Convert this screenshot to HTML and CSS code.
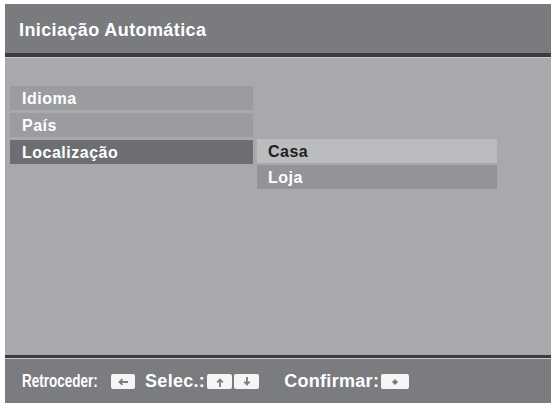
FILE: index.html
```html
<!DOCTYPE html>
<html lang="pt">
<head>
<meta charset="utf-8">
<title>Iniciação Automática</title>
<link rel="stylesheet" href="styles.css">
</head>
<body>
<div class="screen">
  <header class="header">
    <h1 class="title">Iniciação Automática</h1>
  </header>
  <main class="body">
    <ul class="menu">
      <li class="item">Idioma</li>
      <li class="item">País</li>
      <li class="item item-active">Localização</li>
    </ul>
    <ul class="submenu">
      <li class="opt opt-focus">Casa</li>
      <li class="opt">Loja</li>
    </ul>
  </main>
  <footer class="footer">
    <span class="label label-back">Retroceder:</span>
    <span class="key key-back">
      <svg width="12" height="8" viewBox="0 0 12 8"><path d="M11 4H3M5.5 1.2L2.5 4l3 2.8" fill="none" stroke="#7a7b7e" stroke-width="1.8"/></svg>
    </span>
    <span class="label label-sel">Selec.:</span>
    <span class="key">
      <svg width="8" height="10" viewBox="0 0 8 10"><path d="M4 10V3M1.2 5.5L4 2.5l2.8 3" fill="none" stroke="#7a7b7e" stroke-width="1.8"/></svg>
    </span>
    <span class="key">
      <svg width="8" height="10" viewBox="0 0 8 10"><path d="M4 0v7M1.2 4.5L4 7.5l2.8-3" fill="none" stroke="#7a7b7e" stroke-width="1.8"/></svg>
    </span>
    <span class="label label-conf">Confirmar:</span>
    <span class="key key-wide">
      <svg width="8" height="8" viewBox="0 0 8 8"><path d="M4 1L7 4L4 7L1 4Z" fill="#7a7b7e"/></svg>
    </span>
  </footer>
</div>
</body>
</html>
```

FILE: styles.css
```css
* { box-sizing: border-box; }
html, body { margin: 0; padding: 0; background: #ffffff; }
body { width: 553px; height: 403px; overflow: hidden; }

.screen {
  margin: 4px 2px 0 5px;
  height: 399px;
  display: flex;
  flex-direction: column;
  font-family: "Liberation Sans", Arial, sans-serif;
  background: #a8a9ac;
}

.header {
  height: 53px;
  background: #7a7b7e;
  border-bottom: 4px solid #3b3c3e;
  box-shadow: 0 1px 0 #c6c7c9;
  padding: 3px 0 0 14px;
  display: flex;
  align-items: center;
}
.title {
  margin: 0;
  font-size: 18px;
  letter-spacing: 0.4px;
  font-weight: bold;
  color: #ffffff;
}

.body {
  flex: 1;
  display: flex;
  gap: 4px;
  padding: 29px 0 0 5px;
}

.menu, .submenu {
  list-style: none;
  margin: 0;
  padding: 0;
}
.menu { width: 243px; }
.submenu { width: 240px; padding-top: 53px; }

.item, .opt {
  height: 24px;
  line-height: 22px;
  padding: 2px 0 0 12px;
  font-size: 16px;
  letter-spacing: 0.5px;
  font-weight: bold;
  color: #ffffff;
}
.item { background: #9b9ca0; margin-bottom: 3px; }
.item-active { background: #6d6e71; }

.opt { background: #939497; margin-bottom: 2px; padding-left: 11px; }
.opt-focus { background: #bbbcbf; color: #1f1f21; }

.footer {
  height: 48px;
  background: #7b7c7f;
  border-top: 3px solid #3b3c3e;
  box-shadow: inset 0 1px 0 #c6c7c9;
  padding: 2px 0 0 17px;
  display: flex;
  align-items: center;
}
.label {
  font-size: 18px;
  font-weight: bold;
  letter-spacing: 0.3px;
  color: #ffffff;
  white-space: nowrap;
}
.label-back {
  display: inline-block;
  letter-spacing: 0;
  transform: scaleX(0.75);
  transform-origin: left center;
  margin-right: -25px;
}
.label-sel { margin-left: 10px; }
.label-conf { margin-left: 25px; }

.key {
  width: 25px;
  height: 15px;
  background: #f5f5f5;
  border-radius: 2px;
  display: inline-flex;
  align-items: center;
  justify-content: center;
  margin-left: 2px;
}
.key-back { margin-left: 13px; width: 24px; }
.key-wide { width: 28px; }
```
